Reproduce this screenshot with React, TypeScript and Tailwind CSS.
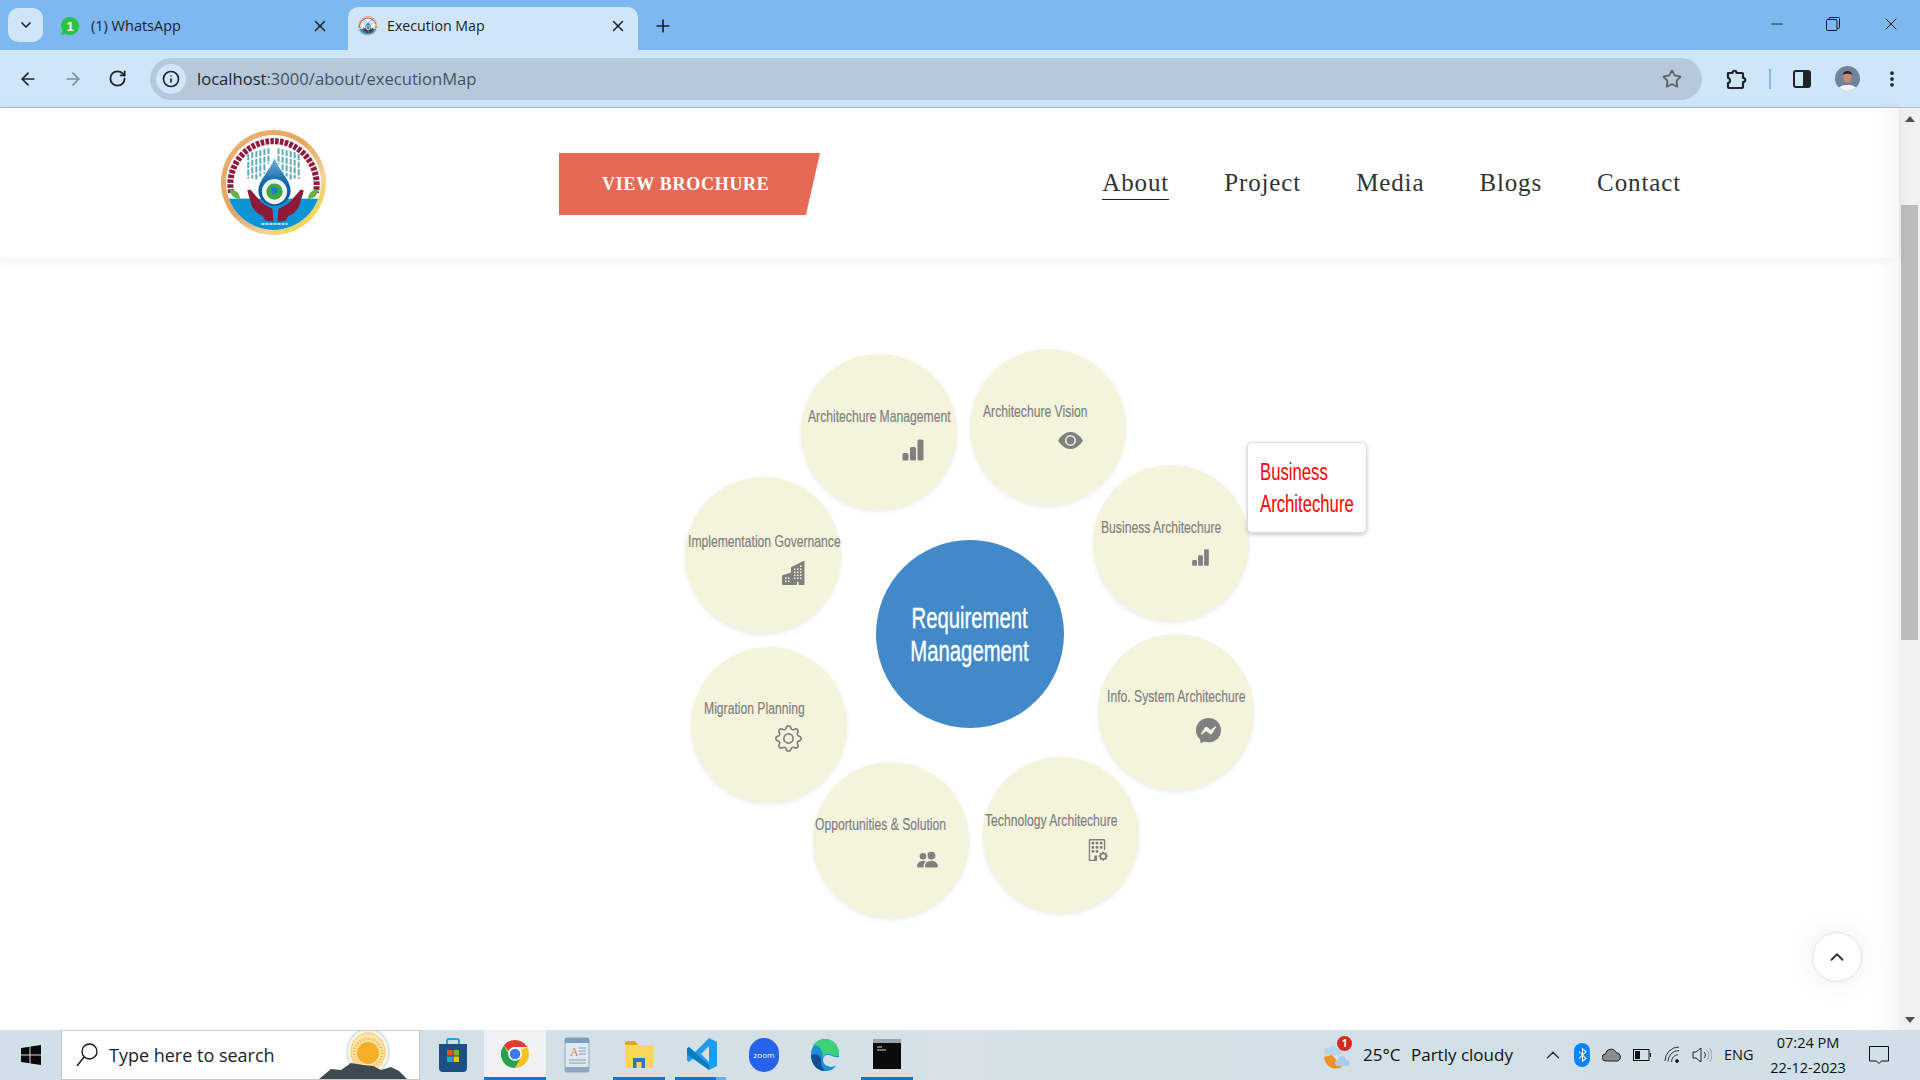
import React from 'react';
import {
  ArrowLeft,
  ArrowRight,
  ChevronDown,
  ChevronUp,
  EllipsisVertical,
  Info,
  Minus,
  Plus,
  RotateCw,
  Star,
  X,
} from 'lucide-react';
import {
  BsBarChartFill,
  BsBuildingGear,
  BsBuildingsFill,
  BsEyeFill,
  BsGear,
  BsMessenger,
  BsPeopleFill,
} from 'react-icons/bs';

const Logo: React.FC<{ className: string; id: string }> = ({ className, id }) => (
  <svg viewBox="0 0 105 105" className={className}>
    <defs>
      <linearGradient id={`${id}-ring`} x1="0" y1="0" x2="1" y2="1">
        <stop offset="0" stopColor="#f0b27a" />
        <stop offset="0.45" stopColor="#e6a35c" />
        <stop offset="0.7" stopColor="#f0d49a" />
        <stop offset="1" stopColor="#f7d800" />
      </linearGradient>
      <linearGradient id={`${id}-drop`} x1="0" y1="0" x2="0" y2="1">
        <stop offset="0" stopColor="#6fb6dc" />
        <stop offset="0.5" stopColor="#1567ad" />
        <stop offset="1" stopColor="#0e4f94" />
      </linearGradient>
      <clipPath id={`${id}-inner`}>
        <circle cx="52" cy="52" r="47" />
      </clipPath>
    </defs>
    <circle cx="52" cy="52" r="52" fill={`url(#${id}-ring)`} />
    <circle cx="52" cy="52" r="47" fill="#fff" />
    <g clipPath={`url(#${id}-inner)`}>
      <rect x="0" y="68" width="105" height="40" fill="#0c95d6" />
      <path d="M27 24v24M31 22v26M35 21v28M39 20v26M43 19v24M47 18v16M57 18v16M61 19v24M65 20v26M69 21v28M73 22v26M77 24v24" stroke="#5fa9b8" strokeWidth="2" strokeDasharray="6 1.500" />
    </g>
    <path d="M10 62A43 43 0 0 1 52 11 43 43 0 0 1 94 62" fill="none" stroke="#8f1b3e" strokeWidth="6" strokeDasharray="3.500 1.300" />
    <path d="M53 28c5 13 16 22 16 32a16 15 0 0 1-32 0c0-10 11-19 16-32z" fill={`url(#${id}-drop)`} />
    <circle cx="53" cy="61" r="12.500" fill="#eaf6ea" />
    <circle cx="53" cy="61" r="8" fill="#3fa548" />
    <path d="M50 56l5 1 2 4-4 3-3-2z" fill="#1a80c4" />
    <path d="M26 60l3-1 8 9c3 5 9 7 14 10l1 13-8-1-3-5c-6-2-11-8-12-15z" fill="#8c1a38" />
    <path d="M82 60l-3-1-8 9c-3 5-9 7-14 10l-1 13 8-1 3-5c6-2 11-8 12-15z" fill="#8c1a38" />
    <path d="M9 59c4 0 9 2 10 9-5 1-10-3-10-9z" fill="#67b04a" />
    <path d="M96 59c-4 0-9 2-10 9 5 1 10-3 10-9z" fill="#67b04a" />
    <path d="M40 93h26" stroke="#f2f6fa" strokeWidth="1.500" strokeDasharray="3 1" />
  </svg>
);

const WhatsAppIcon = () => (
  <svg viewBox="0 0 20 20" className="w-5 h-5 shrink-0">
    <path d="M10 1a9 9 0 0 0-7.700 13.600L1.200 19l4.500-1.100A9 9 0 1 0 10 1z" fill="#25c444" />
    <text x="10" y="14.500" textAnchor="middle" fontSize="13" fontWeight="700" fontFamily="'Liberation Sans', sans-serif" fill="#fff">1</text>
  </svg>
);

const RestoreIcon = () => (
  <svg viewBox="0 0 14 14" className="w-[14px] h-[14px]" fill="none" stroke="#1a1a1a" strokeWidth="1">
    <rect x="0.500" y="2.500" width="10.500" height="11" rx="1" />
    <path d="M3 2.500V1.500a1 1 0 0 1 1-1h8.500a1 1 0 0 1 1 1v9a1 1 0 0 1-1 1H11" />
  </svg>
);

const PuzzleIcon = () => (
  <svg viewBox="0 0 22 22" className="w-[22px] h-[22px]" fill="none" stroke="#1f2429" strokeWidth="2.200" strokeLinejoin="round">
    <path d="M3 5h4.500c0-3 4-3 4 0H17a1 1 0 0 1 1 1v4c3 0 3 4 0 4v5a1 1 0 0 1-1 1H4a1 1 0 0 1-1-1v-4c2.600 0 2.600-5 0-5z" />
  </svg>
);

const SidePanelIcon = () => (
  <svg viewBox="0 0 18 18" className="w-[18px] h-[18px]">
    <rect x="1" y="1" width="16" height="16" rx="2" fill="#cfe5fa" stroke="#1f2429" strokeWidth="2" />
    <path d="M10 1h5a2 2 0 0 1 2 2v12a2 2 0 0 1-2 2h-5z" fill="#1f2429" />
  </svg>
);

const Avatar = () => (
  <svg viewBox="0 0 25 25" className="w-[25px] h-[25px]">
    <clipPath id="av">
      <circle cx="12.500" cy="12.500" r="12.500" />
    </clipPath>
    <g clipPath="url(#av)">
      <rect width="25" height="25" fill="#71829a" />
      <path d="M2 25c1-5 6-6 10.500-6S22 20 23 25z" fill="#f5f5f5" />
      <ellipse cx="12.500" cy="11" rx="4.300" ry="6" fill="#c08e72" />
      <path d="M7.800 9c0-5.500 9.400-5.500 9.400 0-2-1.600-7.400-1.600-9.400 0z" fill="#26221f" />
    </g>
  </svg>
);

const WindowsIcon = () => (
  <svg viewBox="0 0 20 20" className="w-5 h-5" fill="#0a0a0a">
    <path d="M0 3l8.500-1.200V9.500H0zM9.500 1.600L20 0v9.500H9.500zM0 10.500h8.500v7.700L0 17zM9.500 10.500H20V20L9.500 18.400z" />
  </svg>
);

const SunArt = () => (
  <svg viewBox="0 0 100 50" className="w-[100px] h-[50px]">
    <ellipse cx="49" cy="23" rx="21" ry="23" fill="#fff5dc" stroke="#c9e0f0" strokeWidth="1.500" />
    <ellipse cx="49" cy="23" rx="17" ry="19" fill="#fde6b0" stroke="#f3c26e" strokeWidth="1" />
    <circle cx="49" cy="24" r="11" fill="#f5ae26" />
    <circle cx="49" cy="24" r="14" fill="none" stroke="#f5ae26" strokeWidth="3" strokeDasharray="1 2" />
    <path d="M0 50l12-10 10 1 10-7 12 2 10 1 8 4 10-3 8 4 8 8z" fill="#3f4a50" />
  </svg>
);

const StoreIcon = () => (
  <svg viewBox="0 0 30 34" className="w-[30px] h-[34px]">
    <path d="M9 6V3a2 2 0 0 1 2-2h8a2 2 0 0 1 2 2v3" fill="none" stroke="#1fa7e0" strokeWidth="2" />
    <path d="M1 6h28v24a4 4 0 0 1-4 4H5a4 4 0 0 1-4-4z" fill="#1c4f82" />
    <rect x="9" y="12" width="5.500" height="5.500" fill="#e8532b" />
    <rect x="15.500" y="12" width="5.500" height="5.500" fill="#7db52f" />
    <rect x="9" y="18.500" width="5.500" height="5.500" fill="#1fa3e8" />
    <rect x="15.500" y="18.500" width="5.500" height="5.500" fill="#f5bb14" />
  </svg>
);

const ChromeIcon = () => (
  <svg viewBox="0 0 30 30" className="w-[30px] h-[30px]">
    <path d="M15 1a14 14 0 0 1 12.100 7H15a7 7 0 0 0-6.500 4.300L3.900 6.400A14 14 0 0 1 15 1z" fill="#e33b2e" />
    <path d="M27.100 8A14 14 0 0 1 15 29l6-10.500A7 7 0 0 0 20.500 11z" fill="#f9c11c" />
    <path d="M3.900 6.400l6 10.400A7 7 0 0 0 21 18.500L15 29A14 14 0 0 1 3.900 6.400z" fill="#2ca14b" />
    <circle cx="15" cy="15" r="6.800" fill="#fff" />
    <circle cx="15" cy="15" r="5.300" fill="#3b7de8" />
  </svg>
);

const DocIcon = () => (
  <svg viewBox="0 0 26 36" className="w-[26px] h-[36px]">
    <rect x="1" y="1" width="24" height="34" rx="2" fill="#dfe9f2" stroke="#8fa8c0" />
    <rect x="1" y="1" width="24" height="5" fill="#7f9db8" />
    <text x="6" y="19" fontSize="12" fontFamily="'Liberation Serif', serif" fill="#e5813a">A</text>
    <path d="M15 11h7M15 14h7M15 17h7M5 23h17M5 26h17" stroke="#7f9db8" strokeWidth="1.200" />
    <rect x="1" y="30" width="24" height="5" fill="#8fa8c0" />
  </svg>
);

const FolderIcon = () => (
  <svg viewBox="0 0 30 28" className="w-[30px] h-[28px]">
    <path d="M1 3a2 2 0 0 1 2-2h8l3 4h-13z" fill="#e0a526" />
    <rect x="1" y="5" width="28" height="23" rx="1.500" fill="#fbd75e" />
    <path d="M9 28v-10h12v10h-3.500v-6h-5v6z" fill="#2b79c2" />
  </svg>
);

const VsCodeIcon = () => (
  <svg viewBox="0 0 32 34" className="w-[32px] h-[34px]">
    <path d="M23 1l8 4v24l-8 4-14-13-6 5-2-1.500V11.500L3 10l6 5z" fill="#1f9cf0" />
    <path d="M23 9l-8 8 8 8z" fill="#d3e0e7" />
    <path d="M3 10l20 18v5L1 17.500V11.500z" fill="#0d7ac4" />
  </svg>
);

const ZoomIcon = () => (
  <div className="w-[30px] h-[34px] ml-[2px] rounded-[15px] bg-[#2563eb] flex items-center justify-center text-[8px] text-white font-['Open_Sans',sans-serif]">
    zoom
  </div>
);

const EdgeIcon = () => (
  <svg viewBox="0 0 30 34" className="w-[30px] h-[34px]">
    <path d="M15 1C7 1 1 8 1 17s6 16 14 16c5 0 9-2 11-5-6 2-13 0-13-6 0-3 2-5 5-5 4 0 5 3 11 2 1-10-5-18-14-18z" fill="#1a8fd1" />
    <path d="M15 1c8 0 15 7 14 17-6 1-7-2-11-2-3 0-5 2-5 5 0-8-3-14-10-14 3-4 7-6 12-6z" fill="#3bd17a" />
    <path d="M1 17c0 9 6 16 14 16-3-3-4-6-4-10 0-5-4-8-10-6z" fill="#104f94" />
  </svg>
);

const TerminalIcon = () => (
  <svg viewBox="0 0 28 30" className="w-[28px] h-[30px]">
    <rect width="28" height="30" fill="#0b0b0b" />
    <rect width="28" height="4" fill="#9aa5ad" />
    <path d="M4 8h5M4 11h9" stroke="#d8d8d8" strokeWidth="1" />
  </svg>
);

const Tray = () => (
  <div className="ml-auto flex items-center h-full text-[#111] font-['Open_Sans',sans-serif] pr-[31px]">
    <div className="relative w-[29px] h-[30px]">
      <svg viewBox="0 0 29 30" className="w-[29px] h-[30px]">
        <path d="M2 17a12 12 0 0 0 18 10L10 15z" fill="#f0901e" />
        <path d="M2 11a4 4 0 0 1 5-3 5 5 0 0 1 9 1 3 3 0 0 1 1 6H5a3 3 0 0 1-3-4z" fill="#bcd4ea" />
        <path d="M13 23a3 3 0 0 1 3-3 4 4 0 0 1 8 0 3 3 0 0 1 1 6H15a3 3 0 0 1-2-3z" fill="#a8cdea" />
      </svg>
      <span className="absolute -top-[4px] left-[15px] w-[15px] h-[15px] rounded-full bg-[#d32a1e] text-white text-[10px] font-bold leading-[15px] text-center">1</span>
    </div>
    <span className="ml-[12px] w-[48px] text-[17px]">25°C</span>
    <span className="w-[131px] text-[17px]">Partly cloudy</span>
    <ChevronUp className="w-[22px] h-[22px] text-[#222]" strokeWidth={1.300} />
    <div className="ml-[10px] w-4 h-[24px] rounded-full bg-[#0a84ff] flex items-center justify-center">
      <svg viewBox="0 0 10 16" className="w-[9px] h-[14px]" fill="none" stroke="#fff" strokeWidth="1.200">
        <path d="M1 4l8 8-4 3V1l4 3-8 8" />
      </svg>
    </div>
    <svg viewBox="0 0 20 14" className="ml-[12px] w-5 h-[14px]">
      <path d="M4 13a3.500 3.500 0 0 1-.500-7 5.500 5.500 0 0 1 10.500-1.500 4.500 4.500 0 0 1 2 8.500z" fill="#8d8d8d" stroke="#222" strokeWidth="1" />
    </svg>
    <svg viewBox="0 0 18 12" className="ml-[11px] w-[18px] h-3" fill="none" stroke="#111">
      <rect x="0.500" y="0.500" width="15.500" height="11" />
      <rect x="2" y="2" width="5" height="8" fill="#111" stroke="none" />
      <path d="M17.500 4v4" />
    </svg>
    <svg viewBox="0 0 18 18" className="ml-[13px] w-[18px] h-[18px]" fill="none" stroke="#333" strokeWidth="1">
      <path d="M1 15A14 14 0 0 1 15 1M4 15.500A11 11 0 0 1 15 4.500M7.500 16A8 8 0 0 1 14 8.500" />
      <circle cx="13" cy="15" r="1.500" fill="#111" />
    </svg>
    <svg viewBox="0 0 20 18" className="ml-[10px] w-5 h-[18px]" fill="none" stroke="#222" strokeWidth="1">
      <path d="M1 6h3l5-4v14l-5-4H1z" />
      <path d="M12 6a4 4 0 0 1 0 6" />
      <path d="M15 4a8 8 0 0 1 0 10M17.500 2a11 11 0 0 1 0 14" stroke="#999" />
    </svg>
    <span className="ml-[12px] w-[46px] text-[14.500px]">ENG</span>
    <div className="flex flex-col items-center w-[76px] text-[14.500px] leading-[25px]">
      <span>07:24 PM</span>
      <span>22-12-2023</span>
    </div>
    <svg viewBox="0 0 20 20" className="ml-[23px] w-5 h-5" fill="none" stroke="#111" strokeWidth="1">
      <path d="M.5 1.500h19v14.500h-7l-2.500 2.500L7.500 16h-7z" />
    </svg>
  </div>
);

const nodes = [
  { label: 'Architechure Management', pos: 'left-[801px] top-[96px] pl-[7px] pt-[52px]', icon: <BsBarChartFill className="ml-[93px] mt-[10px] w-6 h-6" /> },
  { label: 'Architechure Vision', pos: 'left-[970px] top-[91px] pl-[13px] pt-[52px]', icon: <BsEyeFill className="ml-[75px] mt-[5px] w-[25px] h-[25px]" /> },
  { label: 'Business Architechure', pos: 'left-[1093px] top-[207px] pl-[8px] pt-[52px]', icon: <BsBarChartFill className="ml-[90px] mt-[9px] w-[19px] h-[19px]" /> },
  { label: 'Info. System Architechure', pos: 'left-[1098px] top-[376px] pl-[9px] pt-[52px]', icon: <BsMessenger className="ml-[89px] mt-[10px] w-[25px] h-[25px]" /> },
  { label: 'Technology Architechure', pos: 'left-[983px] top-[499px] pl-[2px] pt-[53px]', icon: <BsBuildingGear className="ml-[101px] mt-[7px] w-[22px] h-[22px]" /> },
  { label: 'Opportunities & Solution', pos: 'left-[813px] top-[504px] pl-[2px] pt-[52px]', icon: <BsPeopleFill className="ml-[102px] mt-[13px] w-[21px] h-[21px]" /> },
  { label: 'Migration Planning', pos: 'left-[691px] top-[389px] pl-[13px] pt-[51px]', icon: <BsGear className="ml-[71px] mt-[5px] w-[27px] h-[27px]" /> },
  { label: 'Implementation Governance', pos: 'left-[685px] top-[219px] pl-[3px] pt-[54px]', icon: <BsBuildingsFill className="ml-[94px] mt-[8px] w-6 h-6" /> },
];

const navItems = ['About', 'Project', 'Media', 'Blogs', 'Contact'];

const App: React.FC = () => {
  return (
    <div className="h-screen w-full flex flex-col overflow-hidden bg-white font-['Open_Sans',sans-serif]">
      {/* tab strip */}
      <div className="h-[50px] bg-[#7db9f0] flex items-end shrink-0 relative">
        <div className="ml-2 mb-2 w-[35px] h-[34px] rounded-[10px] bg-[#cfe5fa] flex items-center justify-center">
          <ChevronDown className="w-4 h-4 text-[#1f1f1f]" strokeWidth={2.500} />
        </div>
        <div className="ml-[17px] w-[288px] h-[43px] flex items-center pb-[5px] text-[14.500px] text-[#1f1f1f]">
          <WhatsAppIcon />
          <span className="ml-[11px]">(1) WhatsApp</span>
          <X className="ml-auto mr-[19px] w-[18px] h-[18px]" strokeWidth={2} />
        </div>
        <div className="w-[290px] h-[43px] rounded-t-[10px] bg-[#cfe5fa] flex items-center pl-[10px] pb-[5px] text-[14.200px] text-[#1f1f1f]">
          <Logo id="fav" className="w-5 h-5 shrink-0" />
          <span className="ml-[9px]">Execution Map</span>
          <X className="ml-auto mr-[11px] w-[18px] h-[18px]" strokeWidth={2} />
        </div>
        <div className="ml-[15px] h-[43px] flex items-center pb-[5px]">
          <Plus className="w-5 h-5 text-[#1f1f1f]" strokeWidth={2} />
        </div>
        <div className="ml-auto h-full flex items-center pb-[2px] text-[#1a1a1a]">
          <Minus className="w-[18px] h-[18px]" strokeWidth={1.200} />
          <div className="ml-[40px]"><RestoreIcon /></div>
          <X className="ml-[41px] mr-[19px] w-5 h-5" strokeWidth={1.200} />
        </div>
      </div>

      {/* toolbar */}
      <div className="h-[58px] bg-[#cfe5fa] border-b border-[#a6bfd4] flex items-center shrink-0">
        <ArrowLeft className="ml-[18px] w-[20px] h-[20px] text-[#1f2429]" strokeWidth={2} />
        <ArrowRight className="ml-[25px] w-[20px] h-[20px] text-[#7c8b98]" strokeWidth={2} />
        <RotateCw className="ml-[25px] w-[19px] h-[19px] text-[#1f2429]" strokeWidth={2.300} />
        <div className="ml-[23px] h-[42px] w-[1552px] rounded-full bg-[#b6c9da] flex items-center pl-[6px]">
          <div className="w-[30px] h-[30px] rounded-full bg-[#cfe5fa] flex items-center justify-center">
            <Info className="w-[18px] h-[18px] text-[#1f2429]" strokeWidth={2.200} />
          </div>
          <span className="ml-[11px] pt-[2px] text-[16.600px] text-[#45525e]">
            <span className="text-[#1f2429]">localhost</span>:3000/about/executionMap
          </span>
          <Star className="ml-auto mr-[20px] w-[20px] h-[20px] text-[#5c6369]" strokeWidth={2.200} />
        </div>
        <div className="ml-[23px]"><PuzzleIcon /></div>
        <div className="ml-[22px] w-[2px] h-[20px] bg-[#7db9f0]" />
        <div className="ml-[22px]"><SidePanelIcon /></div>
        <div className="ml-[24px]"><Avatar /></div>
        <EllipsisVertical className="ml-[22px] w-[20px] h-[20px] text-[#1f2429]" strokeWidth={2.500} />
      </div>

      {/* page */}
      <div className="flex-1 min-h-0 flex">
        <div className="flex-1 min-w-0 flex flex-col relative">
          <header className="h-[150px] shrink-0 bg-white shadow-[0_2px_10px_rgba(0,0,0,0.07)] flex items-center pl-[221px] pr-[218px] relative z-10">
            <Logo id="main" className="w-[106px] h-[106px] shrink-0" />
            <a className="ml-[232px] mt-[2px] w-[261px] h-[62px] bg-[#e56a56] [clip-path:polygon(0_0,100%_0,94.600%_100%,0_100%)] flex items-center pl-[43px] text-white text-[18px] font-bold tracking-[0.04em] font-['Liberation_Serif',serif]">
              VIEW BROCHURE
            </a>
            <nav className="ml-auto flex items-center gap-[55px] font-['Liberation_Serif',serif] text-[25px] text-[#333] tracking-[0.035em]">
              {navItems.map((item, i) => (
                <span key={item} className={`h-[33px] leading-[31px] border-b ${i === 0 ? 'border-[#222]' : 'border-transparent'}`}>
                  {item}
                </span>
              ))}
            </nav>
          </header>

          {/* circle diagram, nodes sit on a free canvas */}
          <div className="flex-1 relative font-['Liberation_Sans',sans-serif]">
            <div className="absolute left-[876px] top-[282px] w-[188px] h-[188px] rounded-full bg-[#4189c9] text-white text-[30px] leading-[33px] flex items-center justify-center text-center">
              <div className="scale-x-[0.676] [-webkit-text-stroke:0.4px_white] whitespace-nowrap">
                Requirement<br />Management
              </div>
            </div>
            {nodes.map((node) => (
              <div key={node.label} className={`absolute w-[156px] h-[156px] rounded-full bg-[#f4f4dd] shadow-[0_2px_4px_rgba(0,0,0,0.08)] text-[#808080] ${node.pos}`}>
                <div className="h-[22px] leading-[22px] text-[17px] whitespace-nowrap origin-left scale-x-[0.715] [-webkit-text-stroke:0.2px_#808080]">{node.label}</div>
                {node.icon}
              </div>
            ))}
            <div className="absolute left-[1247px] top-[184px] w-[120px] h-[91px] bg-white border border-[#ddd] rounded-[5px] shadow-[0_2px_4px_rgba(0,0,0,0.2)] pl-[12px] pt-[13px] text-[23px] leading-[32px] text-[#ff0000]">
              <div className="origin-left scale-x-[0.726] whitespace-nowrap">
                Business<br />Architechure
              </div>
            </div>
            <button className="absolute left-[1812px] top-[674px] w-[50px] h-[50px] rounded-full bg-white border border-[#e2e2e2] shadow-[0_0_30px_rgba(0,0,0,0.08)] flex items-center justify-center">
              <ChevronUp className="w-[22px] h-[22px] text-[#333]" strokeWidth={2} />
            </button>
          </div>
          <div className="absolute right-0 top-0 bottom-0 w-[24px] z-20 pointer-events-none bg-gradient-to-r from-transparent to-[#f7f7f7]" />
        </div>

        {/* scrollbar */}
        <div className="w-[21px] shrink-0 bg-[#f1f1f1] flex flex-col">
          <div className="h-[21px] flex items-center justify-center">
            <svg viewBox="0 0 10 6" className="w-[10px] h-[6px]" fill="#505050"><path d="M5 0l5 6H0z" /></svg>
          </div>
          <div className="mt-[76px] h-[435px] w-[17px] ml-[2px] bg-[#bcbcbc]" />
          <div className="mt-auto h-[21px] flex items-center justify-center">
            <svg viewBox="0 0 10 6" className="w-[10px] h-[6px]" fill="#505050"><path d="M0 0h10L5 6z" /></svg>
          </div>
        </div>
      </div>

      {/* taskbar */}
      <div className="h-[50px] shrink-0 bg-gradient-to-r from-[#d0dfe8] via-[#d6e0e6] to-[#d0dfe8] flex items-stretch">
        <div className="w-[61px] flex items-center justify-center"><WindowsIcon /></div>
        <div className="w-[359px] bg-white border border-[#c8c8c8] flex items-center pl-[14px] relative overflow-hidden">
          <svg viewBox="0 0 22 24" className="w-[22px] h-[24px]" fill="none" stroke="#111" strokeWidth="1.300">
            <circle cx="13.500" cy="8.500" r="7.500" />
            <path d="M8 14L1 23" />
          </svg>
          <span className="ml-[11px] text-[18px] text-[#222]">Type here to search</span>
          <div className="ml-auto self-end"><SunArt /></div>
        </div>
        <div className="ml-[2px] flex items-stretch">
          <div className="w-[62px] flex items-center justify-center"><StoreIcon /></div>
          <div className="w-[62px] flex items-center justify-center bg-[#eef2f5] border-b-[3px] border-[#0a78d4]"><ChromeIcon /></div>
          <div className="w-[62px] flex items-center justify-center"><DocIcon /></div>
          <div className="w-[62px] px-[5px] flex"><div className="flex-1 flex items-center justify-center border-b-[3px] border-[#0a78d4]"><FolderIcon /></div></div>
          <div className="w-[62px] pl-[5px] flex">
            <div className="flex-1 flex flex-col">
              <div className="flex-1 flex items-center justify-center pr-[3px]"><VsCodeIcon /></div>
              <div className="flex h-[3px]">
                <div className="w-[41px] bg-[#0a78d4]" />
                <div className="w-[10px] bg-[#6aaee6]" />
              </div>
            </div>
          </div>
          <div className="w-[62px] flex items-center justify-center"><ZoomIcon /></div>
          <div className="w-[62px] flex items-center justify-center"><EdgeIcon /></div>
          <div className="w-[62px] px-[5px] flex"><div className="flex-1 flex items-center justify-center border-b-[3px] border-[#0a78d4]"><TerminalIcon /></div></div>
        </div>
        <Tray />
      </div>
    </div>
  );
};

export default App;
